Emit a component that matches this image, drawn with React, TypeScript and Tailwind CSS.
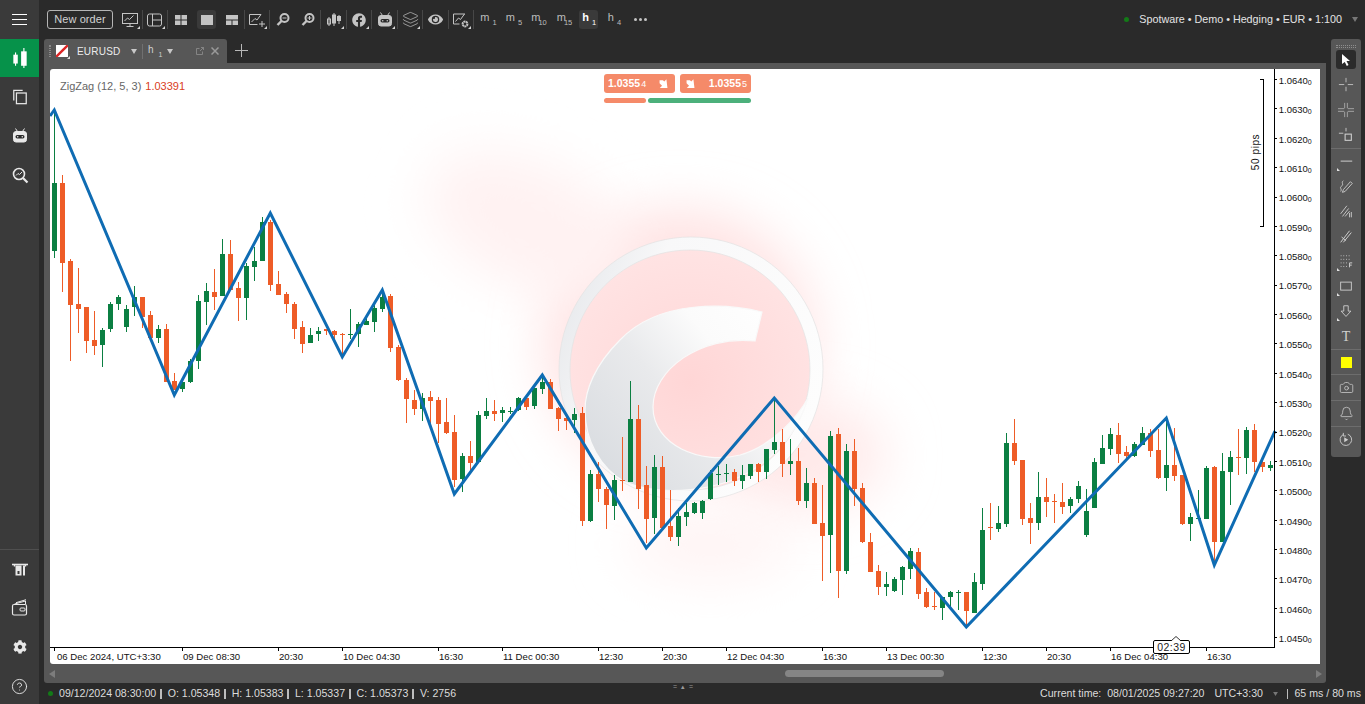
import type { ReactNode } from "react";
import { Bell, Camera, CircleHelp, Layers } from "lucide-react";
import { FaCog, FaEye, FaFacebook } from "react-icons/fa";

// [colour, wickTop, wickBottom, bodyTop, bodyBottom]; candles are 8px apart
type Candle = ["g" | "r", number, number, number, number];
const candles: Candle[] = [
  ["g", 110, 258, 183, 251], ["r", 175, 292, 183, 263], ["r", 259, 361, 261, 305], ["r", 268, 333, 304, 309],
  ["r", 307, 353, 307, 341], ["r", 311, 355, 340, 346], ["g", 328, 367, 330, 345], ["g", 302, 332, 304, 329],
  ["g", 295, 310, 297, 304], ["g", 305, 332, 309, 327], ["g", 286, 316, 297, 307], ["r", 297, 328, 297, 317],
  ["r", 311, 340, 315, 338], ["g", 325, 343, 329, 338], ["r", 324, 382, 329, 382], ["r", 373, 390, 381, 390],
  ["g", 380, 392, 382, 389], ["g", 359, 383, 361, 382], ["g", 295, 369, 301, 361], ["g", 283, 325, 291, 302],
  ["r", 269, 310, 292, 297], ["g", 239, 296, 254, 296], ["r", 240, 290, 254, 290], ["r", 282, 321, 288, 298],
  ["g", 263, 320, 266, 298], ["g", 247, 281, 261, 267], ["g", 217, 261, 222, 261], ["r", 220, 291, 222, 285],
  ["r", 271, 295, 284, 295], ["r", 292, 313, 294, 304], ["r", 302, 339, 304, 329], ["r", 321, 353, 327, 344],
  ["g", 328, 343, 335, 343], ["g", 327, 341, 331, 334], ["r", 329, 335, 329, 331], ["r", 330, 343, 331, 335],
  ["r", 333, 355, 334, 335], ["g", 309, 339, 334, 335], ["g", 322, 347, 324, 334], ["g", 318, 325, 321, 325],
  ["g", 305, 332, 308, 322], ["g", 290, 312, 297, 309], ["r", 294, 352, 296, 348], ["r", 345, 381, 347, 380],
  ["r", 378, 423, 380, 399], ["r", 390, 415, 400, 409], ["g", 393, 421, 398, 409], ["r", 391, 423, 397, 401],
  ["r", 397, 443, 400, 424], ["r", 398, 434, 422, 433], ["r", 415, 487, 432, 480], ["g", 453, 492, 456, 479],
  ["r", 441, 470, 456, 463], ["g", 411, 463, 415, 462], ["g", 398, 419, 411, 416], ["r", 400, 421, 411, 414],
  ["g", 407, 422, 410, 413], ["g", 407, 414, 411, 412], ["g", 397, 411, 398, 410], ["r", 397, 410, 398, 407],
  ["g", 388, 409, 388, 406], ["g", 375, 394, 382, 389], ["r", 379, 409, 382, 409], ["r", 407, 431, 408, 419],
  ["r", 417, 430, 418, 421], ["g", 408, 433, 414, 420], ["r", 407, 526, 413, 521], ["g", 470, 522, 474, 521],
  ["r", 462, 502, 474, 489], ["r", 487, 529, 489, 505], ["g", 475, 520, 480, 506], ["r", 437, 491, 480, 481],
  ["g", 381, 482, 419, 482], ["r", 405, 509, 419, 489], ["r", 466, 543, 485, 519], ["g", 455, 534, 467, 518],
  ["r", 456, 528, 467, 528], ["r", 490, 541, 526, 537], ["g", 508, 546, 516, 537], ["g", 503, 526, 512, 517],
  ["g", 502, 514, 503, 513], ["g", 500, 519, 501, 513], ["g", 470, 500, 473, 499], ["g", 466, 485, 474, 475],
  ["g", 464, 482, 473, 474], ["r", 469, 486, 472, 481], ["g", 465, 489, 475, 481], ["g", 464, 479, 464, 476],
  ["r", 463, 482, 464, 472], ["g", 449, 479, 449, 472], ["g", 400, 454, 442, 450], ["r", 429, 477, 442, 464],
  ["g", 439, 475, 461, 464], ["r", 448, 505, 461, 501], ["g", 468, 508, 483, 501], ["r", 478, 524, 483, 524],
  ["r", 485, 581, 523, 536], ["g", 431, 573, 436, 535], ["r", 428, 598, 434, 571], ["g", 444, 574, 451, 571],
  ["r", 439, 506, 451, 489], ["r", 483, 543, 488, 542], ["r", 533, 572, 542, 572], ["r", 565, 595, 571, 587],
  ["g", 572, 596, 584, 587], ["g", 577, 592, 579, 591], ["g", 566, 595, 567, 580], ["g", 548, 579, 551, 569],
  ["r", 548, 599, 552, 594], ["r", 588, 608, 592, 607], ["r", 592, 610, 606, 607], ["g", 597, 620, 597, 608],
  ["g", 591, 607, 592, 597], ["g", 590, 610, 592, 593], ["r", 592, 627, 592, 611], ["g", 573, 613, 582, 613],
  ["g", 508, 590, 530, 584], ["r", 503, 540, 527, 528], ["g", 506, 532, 523, 529], ["g", 433, 527, 443, 524],
  ["r", 419, 465, 443, 461], ["r", 460, 525, 460, 519], ["r", 503, 544, 518, 523], ["g", 472, 530, 497, 523],
  ["r", 478, 517, 497, 502], ["r", 494, 523, 501, 502], ["r", 483, 514, 502, 507], ["g", 497, 513, 499, 506],
  ["g", 481, 503, 486, 499], ["g", 489, 537, 511, 535], ["g", 458, 508, 462, 508], ["g", 435, 464, 448, 464],
  ["g", 428, 455, 434, 449], ["r", 423, 463, 435, 454], ["r", 446, 458, 452, 456], ["g", 442, 457, 444, 456],
  ["g", 427, 445, 433, 445], ["r", 429, 457, 433, 451], ["r", 429, 479, 450, 478], ["g", 420, 491, 465, 478],
  ["r", 428, 481, 465, 476], ["r", 475, 525, 475, 524], ["g", 513, 541, 517, 524], ["g", 490, 519, 518, 519],
  ["g", 466, 519, 468, 519], ["r", 466, 563, 467, 542], ["g", 453, 542, 471, 542], ["g", 451, 505, 457, 472],
  ["r", 429, 475, 457, 458], ["g", 427, 474, 430, 458], ["r", 424, 472, 430, 462], ["r", 461, 472, 462, 467],
  ["g", 461, 471, 465, 468],
];

const zigzag = "50,116 54.3,110 174.3,395 270.3,213 342.3,357 382.3,290 454.3,494 542.3,375 646.3,548 774.3,398 966.3,627 1166.3,418 1214.3,565 1275,431";

const prices = ["1.0640", "1.0630", "1.0620", "1.0610", "1.0600", "1.0590", "1.0580", "1.0570", "1.0560", "1.0550", "1.0540", "1.0530", "1.0520", "1.0510", "1.0500", "1.0490", "1.0480", "1.0470", "1.0460", "1.0450"];

const times: [number, string][] = [
  [54, "06 Dec 2024, UTC+3:30"], [182, "09 Dec 08:30"], [278, "20:30"], [342, "10 Dec 04:30"], [438, "16:30"],
  [502, "11 Dec 00:30"], [598, "12:30"], [662, "20:30"], [726, "12 Dec 04:30"], [822, "16:30"], [886, "13 Dec 00:30"],
  [982, "12:30"], [1046, "20:30"], [1110, "16 Dec 04:30"], [1206, "16:30"],
];

function Watermark() {
  return (
    <g>
      <circle cx="680" cy="345" r="135" fill="#ffe2e2" filter="url(#glow)" />
      <ellipse cx="530" cy="225" rx="110" ry="62" fill="#fff2f2" filter="url(#glow)" transform="rotate(25 530 225)" />
      <ellipse cx="800" cy="455" rx="85" ry="55" fill="#ffe9e9" filter="url(#glow)" />
      <ellipse cx="710" cy="545" rx="85" ry="35" fill="#fff4f4" filter="url(#glow)" />
      <circle cx="690" cy="370" r="120" fill="url(#disc)" />
      <path d="M691 237a132 132 0 1 0 .01 0zM690 250a120 120 0 1 1-.01 0z" fillRule="evenodd" fill="url(#ring)" stroke="#e2e2e2" strokeWidth="0.7" />
      <path d="M762 312C730 304 660 298 620 340C595 365 585 390 585 410C585 440 600 468 625 482C660 496 720 494 760 465C785 447 800 425 808 398C800 413 775 445 740 455C700 465 653 445 653 407C653 370 700 335 755 341Z" fill="url(#crescent)" stroke="#f9f9f9" strokeWidth="1.2" />
    </g>
  );
}

function ChartSvg() {
  return (
    <svg viewBox="50 69 1270 595" className="block h-full w-full">
      <defs>
        <filter id="glow" x="-60%" y="-60%" width="220%" height="220%">
          <feGaussianBlur stdDeviation="26" />
        </filter>
        <radialGradient id="disc" cx="50%" cy="55%" r="55%">
          <stop offset="0%" stopColor="#ffd6d6" />
          <stop offset="100%" stopColor="#ffe3e3" />
        </radialGradient>
        <linearGradient id="ring" x1="0" y1="0.2" x2="1" y2="0.6">
          <stop offset="0%" stopColor="#e6e8eb" />
          <stop offset="30%" stopColor="#f8f8f9" />
          <stop offset="100%" stopColor="#fdfdfd" />
        </linearGradient>
        <linearGradient id="crescent" x1="0" y1="0.75" x2="0.95" y2="0.1">
          <stop offset="0%" stopColor="#dadde1" />
          <stop offset="40%" stopColor="#e9eaec" />
          <stop offset="68%" stopColor="#fbfbfb" />
          <stop offset="100%" stopColor="#ffffff" />
        </linearGradient>
      </defs>
      <Watermark />
      <g shapeRendering="crispEdges">
        {candles.map(([c, wt, wb, bt, bb], i) => {
          const fill = c === "g" ? "#0b7f42" : "#ee5c27";
          return (
            <g key={i} fill={fill}>
              <rect x={54 + 8 * i} y={wt} width="1" height={wb - wt} />
              <rect x={52 + 8 * i} y={bt} width="5" height={Math.max(bb - bt, 1)} />
            </g>
          );
        })}
      </g>
      <rect x="1275.5" y="69" width="44.5" height="595" fill="#fff" />
      <polyline points={zigzag} fill="none" stroke="#0f6cb3" strokeWidth="3" strokeLinejoin="miter" />
      <g shapeRendering="crispEdges" fill="#000">
        <rect x="1274" y="69" width="1" height="579" />
        <rect x="50" y="647" width="1225" height="1" />
        {prices.map((_, i) => (
          <rect key={i} x="1275" y={79 + Math.round(i * 29.38)} width="2" height="1" />
        ))}
        {times.map(([x, t]) => (
          <rect key={x + t} x={x} y="648" width="1" height="3" />
        ))}
        <rect x="1263" y="79" width="1" height="148" />
        <rect x="1260" y="79" width="3" height="1" />
        <rect x="1260" y="226" width="3" height="1" />
      </g>
      {prices.map((p, i) => (
        <text key={p} x="1278.8" y={83.8 + i * 29.38} fontSize="9.5" fill="#111">
          {p}
          <tspan fontSize="7" dy="1">0</tspan>
        </text>
      ))}
      {times.map(([x, t], i) => (
        <text key={x + t} x={x + (i === 0 ? 3 : 1)} y="660" fontSize="9.6" fill="#111">
          {t}
        </text>
      ))}
    </svg>
  );
}

function Tool({ children, tri, sep, active }: { children: ReactNode; tri?: boolean; sep?: boolean; active?: boolean }) {
  return (
    <div className={`relative flex h-[19px] w-[25.5px] shrink-0 items-center justify-center text-[#c4c4c4] ${sep ? "border-r border-[#474747]" : ""}`}>
      {active && <div className="absolute left-[3px] top-0 h-[19px] w-[19px] rounded-[3px] bg-[#3a3a3a]" />}
      <div className="relative flex">{children}</div>
      {tri && (
        <svg viewBox="0 0 3 3" className="absolute bottom-0 right-[2px] h-[3px] w-[3px]">
          <path d="M3 0v3H0z" fill="#d5d5d5" />
        </svg>
      )}
    </div>
  );
}

function Frame({ active, label, sub, tight }: { active?: boolean; label: string; sub: string; tight?: boolean }) {
  return (
    <div className="relative flex h-[19px] w-[25.5px] shrink-0 items-center">
      {active && <div className="absolute left-[3px] top-0 h-[19px] w-[19px] rounded-[3px] bg-[#3a3a3a]" />}
      <span className={`relative ml-[6px] flex items-start text-[11px] leading-none ${active ? "font-bold text-white" : "text-[#bdbdbd]"}`}>
        {label}
        <span className={`mt-[7px] text-[7.5px] font-normal leading-none ${tight ? "-ml-[2px]" : "ml-[3px]"}`}>{sub}</span>
      </span>
    </div>
  );
}

function S({ children, size = 18, className = "" }: { children: ReactNode; size?: number; className?: string }) {
  return (
    <svg viewBox="0 0 18 18" width={size} height={size} fill="none" stroke="currentColor" strokeWidth="1" className={className}>
      {children}
    </svg>
  );
}

function RobotFace() {
  return (
    <S>
      <path d="M4.5 1.5l2 3M13.5 1.5l-2 3" />
      <rect x="2.5" y="4.5" width="13" height="10.5" rx="2.5" fill="currentColor" />
      <rect x="4.5" y="8" width="9" height="3.5" rx="1.7" fill="#2a2a2a" stroke="none" />
      <circle cx="6.7" cy="9.7" r="0.8" fill="currentColor" stroke="none" />
      <circle cx="11.3" cy="9.7" r="0.8" fill="currentColor" stroke="none" />
    </S>
  );
}

function Toolbar() {
  return (
    <div className="flex h-[39px] shrink-0 items-center pl-2">
      <button className="h-[19px] w-[66px] rounded-[3px] border border-[#b5b5b5] text-[11px] leading-none tracking-[0.1px] text-[#d2d2d2]">New order</button>
      <div className="ml-[4.25px] flex items-center">
        <Tool sep tri>
          <S>
            <rect x="1.5" y="2.5" width="15" height="10" />
            <path d="M3.5 10l3-3 2 1.5 4-4M9 12.5v3M5.5 15.5h7" />
          </S>
        </Tool>
        <Tool sep tri>
          <S>
            <rect x="1.5" y="3" width="14" height="12" rx="2" />
            <path d="M6.5 3v12M6.5 9h9" />
          </S>
        </Tool>
        <Tool>
          <S>
            <g fill="currentColor" stroke="none">
              <rect x="3" y="4" width="5.5" height="4.5" />
              <rect x="9.5" y="4" width="5.5" height="4.5" />
              <rect x="3" y="9.5" width="5.5" height="4.5" />
              <rect x="9.5" y="9.5" width="5.5" height="4.5" />
            </g>
          </S>
        </Tool>
        <Tool active>
          <S>
            <rect x="3" y="4" width="12" height="10" fill="currentColor" stroke="none" />
          </S>
        </Tool>
        <Tool sep>
          <S>
            <g fill="currentColor" stroke="none">
              <rect x="3" y="4" width="12" height="4.5" />
              <rect x="3" y="9.5" width="5.5" height="4.5" />
              <rect x="9.5" y="9.5" width="5.5" height="4.5" />
            </g>
          </S>
        </Tool>
        <Tool sep tri>
          <S>
            <path d="M13 3.5H1.5v10h8" />
            <path d="M3.5 11l3.5-3.5 2 1.5 4-5.5M14 10v6M11 13h6" />
          </S>
        </Tool>
        <Tool>
          <S>
            <circle cx="10.5" cy="7" r="4" strokeWidth="2" />
            <path d="M7.5 10L3.5 14" strokeWidth="2.4" />
            <path d="M8.5 7h4" />
          </S>
        </Tool>
        <Tool sep>
          <S>
            <circle cx="10.5" cy="7" r="4" strokeWidth="2" />
            <path d="M7.5 10L3.5 14" strokeWidth="2.4" />
            <path d="M8.5 7h4M10.5 5v4" />
          </S>
        </Tool>
        <Tool sep tri>
          <S>
            <path d="M4 6v9M9 2v13M14 4v9" />
            <rect x="2.5" y="8" width="3" height="5" fill="none" />
            <rect x="7.5" y="4" width="3" height="8" fill="currentColor" />
            <rect x="12.5" y="5.5" width="3" height="4" fill="currentColor" />
          </S>
        </Tool>
        <Tool sep tri>
          <FaFacebook size={14} />
        </Tool>
        <Tool sep tri>
          <RobotFace />
        </Tool>
        <Tool sep tri>
          <Layers size={17} strokeWidth={1} />
        </Tool>
        <Tool sep>
          <FaEye size={15} />
        </Tool>
        <Tool sep tri>
          <S>
            <path d="M13 3H1.5v10h6" />
            <path d="M3.5 10.5l3-3.5 2 1.5 4-5.5" />
            <circle cx="13" cy="13" r="2.4" strokeWidth="2" strokeDasharray="1.8 0.4" />
          </S>
        </Tool>
        <Frame label="m" sub="1" />
        <Frame label="m" sub="5" />
        <Frame label="m" sub="10" tight />
        <Frame label="m" sub="15" tight />
        <Frame label="h" sub="1" active />
        <Frame label="h" sub="4" />
        <Tool>
          <span className="flex gap-[2px]">
            <i className="h-[3px] w-[3px] rounded-full bg-[#c4c4c4]" />
            <i className="h-[3px] w-[3px] rounded-full bg-[#c4c4c4]" />
            <i className="h-[3px] w-[3px] rounded-full bg-[#c4c4c4]" />
          </span>
        </Tool>
      </div>
      <div className="ml-auto flex items-center pr-[7px] text-[10.75px] text-[#e4e4e4]">
        <i className="mr-[10px] h-[5px] w-[5px] rounded-full bg-[#137a17]" />
        <span>Spotware • Demo • Hedging • EUR • 1:100</span>
        <svg viewBox="0 0 6 5" className="ml-[10px] h-[5px] w-[6px]">
          <path d="M0 0h6L3 5z" fill="#777" />
        </svg>
      </div>
    </div>
  );
}

function Sidebar() {
  return (
    <aside className="flex w-[39px] shrink-0 flex-col bg-[#3a3a3a] text-[#e8e8e8]">
      <div className="flex h-[39px] items-center justify-center">
        <div className="flex w-[15px] flex-col gap-[4px]">
          <i className="h-px bg-white" />
          <i className="h-px bg-white" />
          <i className="h-px bg-white" />
        </div>
      </div>
      <div className="flex h-[38px] items-center justify-center bg-[#06924a] text-white">
        <S size={20}>
          <g fill="currentColor" stroke="none">
            <rect x="3" y="6" width="4" height="8" />
            <rect x="4.5" y="4" width="1" height="12" />
            <rect x="10" y="3" width="5" height="13" />
            <rect x="12" y="0" width="1" height="18" />
          </g>
        </S>
      </div>
      <div className="flex flex-col items-center">
        <div className="flex h-[40px] items-center justify-center">
          <S size={16}>
            <rect x="5" y="4.5" width="11" height="12" strokeWidth="1.4" />
            <path d="M2 13V1.5h10" strokeWidth="1.4" />
          </S>
        </div>
        <div className="flex h-[38px] items-center justify-center">
          <RobotFace />
        </div>
        <div className="flex h-[40px] items-center justify-center">
          <S>
            <circle cx="8" cy="8" r="5.5" strokeWidth="1.6" />
            <path d="M12 12l4.5 4.5" strokeWidth="2.2" />
            <path d="M5 9.5l2-2 1.5 1 2.5-2.5" />
          </S>
        </div>
      </div>
      <div className="mt-auto flex flex-col items-center border-t border-[#4f4f4f]">
        <div className="flex h-[40px] items-center justify-center">
          <S>
            <path d="M1 3.5h16" strokeWidth="1.6" />
            <path d="M3.5 3.5v2M14.5 3.5v2" strokeWidth="1.4" />
            <rect x="4.5" y="4.5" width="6" height="10" fill="currentColor" stroke="none" />
            <rect x="6.5" y="10" width="2" height="3" fill="#3a3a3a" stroke="none" />
            <rect x="12" y="4.5" width="2" height="10" fill="currentColor" stroke="none" />
          </S>
        </div>
        <div className="flex h-[36px] items-center justify-center">
          <S>
            <rect x="1.5" y="5.5" width="14" height="10.5" rx="1.5" strokeWidth="1.2" />
            <path d="M3.5 5l11-3v3M5 3.7l10-3" />
            <rect x="9" y="9" width="5" height="3" rx="1" />
          </S>
        </div>
        <div className="flex h-[42px] items-center justify-center">
          <FaCog size={14} />
        </div>
        <div className="flex h-[36px] items-center justify-center">
          <CircleHelp size={17} strokeWidth={1.3} />
        </div>
      </div>
    </aside>
  );
}

function Tabs() {
  return (
    <div className="flex h-[24px] shrink-0 items-end">
      <div className="flex h-[24px] w-[183px] items-center rounded-t-[3px] bg-[#575757]">
        <div className="ml-[5px] h-[12px] w-[2px] border-x border-dotted border-[#8a8a8a]" />
        <div className="relative ml-[5px]">
          <svg viewBox="0 0 12 12" className="block h-[12px] w-[12px]">
            <rect width="12" height="12" fill="#fff" />
            <path d="M0 12L12 0" stroke="#dc2626" strokeWidth="2.4" />
            <path d="M0 0h6L0 6z" fill="#fff" />
          </svg>
          <svg viewBox="0 0 3 3" className="absolute -bottom-[2px] -right-[2px] h-[3px] w-[3px]">
            <path d="M3 0v3H0z" fill="#ddd" />
          </svg>
        </div>
        <span className="ml-[9px] w-[49px] text-[10px] tracking-[0.2px] text-[#ececec]">EURUSD</span>
        <svg viewBox="0 0 6 5" className="ml-[5px] h-[5px] w-[6px]">
          <path d="M0 0h6L3 5z" fill="#c8c8c8" />
        </svg>
        <div className="ml-[5px] h-[15px] w-px bg-[#707070]" />
        <span className="ml-[5px] flex items-start text-[10px] leading-none text-[#cfcfcf]">
          h<span className="ml-[5px] mt-[6px] text-[7px] leading-none">1</span>
        </span>
        <svg viewBox="0 0 6 5" className="ml-[5px] h-[5px] w-[6px]">
          <path d="M0 0h6L3 5z" fill="#c8c8c8" />
        </svg>
        <svg viewBox="0 0 8 8" className="ml-[23px] h-[8px] w-[8px]" fill="none" stroke="#8f8f8f">
          <path d="M3.5 1.5H.5v6h6v-3M4 4l3.5-3.5M5 .5h2.5V3" strokeWidth="0.8" />
        </svg>
        <svg viewBox="0 0 8 8" className="ml-[7px] h-[8px] w-[8px]" fill="none" stroke="#9a9a9a">
          <path d="M.5.5l7 7M7.5.5l-7 7" strokeWidth="1.5" />
        </svg>
      </div>
      <svg viewBox="0 0 13 13" className="mb-[6px] ml-[8px] h-[13px] w-[13px]" fill="none" stroke="#b8b8b8">
        <path d="M6.5 0v13M0 6.5h13" />
      </svg>
    </div>
  );
}

function SmallNum({ v, s }: { v: string; s: string }) {
  return (
    <span className="text-[10.5px] font-bold leading-none text-white">
      {v}
      <span className="ml-px text-[9px] font-normal">{s}</span>
    </span>
  );
}

function ArrowDR() {
  return (
    <svg viewBox="0 0 8 8" className="h-[9px] w-[9px]">
      <path d="M.5 1h3l1.2 1.2L6.6.3 7.5 8H.7l2-2L.5 3.8z" fill="#fff" />
    </svg>
  );
}

function ChartPanel() {
  return (
    <div className="relative h-[595px] rounded-[3px] bg-white">
      <ChartSvg />
      <div className="absolute left-[10px] top-[11px] flex gap-[4px] text-[11px] leading-[13px] text-[#666]">
        <span>ZigZag (12, 5, 3)</span>
        <span className="text-[#d9401c]">1.03391</span>
      </div>
      <div className="absolute left-[554px] top-[5px] flex w-[147px] flex-col gap-[5px]">
        <div className="flex gap-[5px]">
          <div className="flex h-[19px] w-[71px] items-center justify-between rounded-[3px] bg-[#f58a69] pl-[4px] pr-[7px]">
            <SmallNum v="1.0355" s="4" />
            <ArrowDR />
          </div>
          <div className="flex h-[19px] w-[71px] items-center justify-between rounded-[3px] bg-[#f58a69] pl-[6px] pr-[4px]">
            <ArrowDR />
            <SmallNum v="1.0355" s="5" />
          </div>
        </div>
        <div className="flex gap-[2px]">
          <div className="h-[5px] w-[42px] rounded-full bg-[#f58a69]" />
          <div className="h-[5px] flex-1 rounded-full bg-[#4cb07b]" />
        </div>
      </div>
      <div className="absolute left-[1206px] top-[77px] origin-center -translate-x-1/2 -rotate-90 text-[10px] leading-[12px] tracking-[0.6px] text-[#111]">50 pips</div>
      <div className="absolute left-[1103px] top-[571px] flex h-[14px] w-[37px] items-center justify-center rounded-[2px] border border-black bg-white text-[10.5px] leading-none tracking-[0.4px] text-[#222]">
        02:39
        <svg viewBox="0 0 10 5" className="absolute -top-[5px] left-[17px] h-[5px] w-[10px]" fill="#fff" stroke="#000" strokeWidth="0.8">
          <path d="M0 5l5-4.5L10 5" />
        </svg>
      </div>
    </div>
  );
}

function ChartFrame() {
  return (
    <div className="flex min-w-0 flex-1 flex-col">
      <Tabs />
      <div className="flex flex-1 flex-col rounded-b-[3px] bg-[#575757] px-[6px] pt-[6px]">
        <ChartPanel />
        <div className="relative flex flex-1 items-center">
          <svg viewBox="0 0 6 8" className="ml-[-1px] h-[8px] w-[6px]">
            <path d="M6 0v8L0 4z" fill="#7d7d7d" />
          </svg>
          <div className="ml-[730px] h-[7px] w-[159px] rounded-full bg-[#858585]" />
          <svg viewBox="0 0 6 8" className="ml-auto mr-[-2px] h-[8px] w-[6px]">
            <path d="M0 0v8l6-4z" fill="#7d7d7d" />
          </svg>
        </div>
      </div>
    </div>
  );
}

function Drawing({ children, tri }: { children: ReactNode; tri?: boolean }) {
  return (
    <div className="relative flex h-[25px] items-center justify-center text-[#d0d0d0]">
      {children}
      {tri && (
        <svg viewBox="0 0 3 3" className="absolute bottom-[3px] left-[6px] h-[3px] w-[3px]">
          <path d="M0 0v3h3z" fill="#e0e0e0" />
        </svg>
      )}
    </div>
  );
}

function DrawingTools() {
  return (
    <div className="mr-[4px] flex h-[418px] w-[30px] shrink-0 flex-col rounded-[3px] bg-[#575757]">
      <div className="mx-[5px] mt-[6px] h-[3px] border-y border-dotted border-[#8e8e8e]" />
      <div className="mx-[5px] mt-[2px] flex h-[19px] items-center justify-center rounded-[3px] bg-[#2b2b2b]">
        <svg viewBox="0 0 10 12" className="h-[12px] w-[10px]">
          <path d="M1 0l8 7H5.5l2 4-1.7 1-2-4L1 10z" fill="#fff" />
        </svg>
      </div>
      <div className="mt-[3px] flex flex-col">
        <Drawing>
          <S size={16}><path d="M1 8.5h6M11 8.5h6M9 1v5M9 11v5" strokeWidth="0.9" /></S>
        </Drawing>
        <Drawing>
          <S size={16}><path d="M0 7.5h7M11 7.5h7M0 10.5h7M11 10.5h7M7.5 1v6M10.5 1v6M7.5 11v6M10.5 11v6" strokeWidth="0.7" /></S>
        </Drawing>
        <div className="border-b border-[#6d6d6d] pb-[1px]">
          <Drawing>
            <S size={16}><path d="M1 7h5M9 1v4" /><rect x="8" y="8" width="7" height="7" strokeWidth="1.2" /></S>
          </Drawing>
        </div>
        <Drawing tri>
          <S size={16}><path d="M3 8h13" strokeWidth="1.1" /></S>
        </Drawing>
        <Drawing>
          <S size={16}><path d="M6 2C3 4 7 6 4 8s1 3-1 6M8 14l8-9-2-2-8 9-1 3z" /></S>
        </Drawing>
        <Drawing>
          <S size={16}><path d="M3 11L10 2M5 14l7-9M8 14l5-6M13 10v5M15 9v6" /></S>
        </Drawing>
        <Drawing>
          <S size={16}><path d="M3 15L13 2M6 15l9-11M4 9l5 4" strokeWidth="1.1" /></S>
        </Drawing>
        <Drawing tri>
          <S size={16}>
            <path d="M3 2h12M3 6h12M3 10h8M3 14h7" strokeDasharray="1 2" />
            <path d="M13 10v5M13 10h3M13 12.5h2.5" strokeWidth="1.1" />
          </S>
        </Drawing>
        <Drawing tri>
          <S size={16}><rect x="3" y="3.5" width="12" height="9" /></S>
        </Drawing>
        <Drawing tri>
          <S size={16}><path d="M6.5 2h5v6h3L9 14 3.5 8h3z" /></S>
        </Drawing>
        <div className="border-b border-[#6d6d6d]">
          <Drawing>
            <span className="text-[14px] leading-none [font-family:'Liberation_Serif',serif]">T</span>
          </Drawing>
        </div>
        <div className="flex h-[25px] items-center justify-center border-b border-[#6d6d6d]">
          <i className="h-[11px] w-[11px] bg-[#ffff00]" />
        </div>
        <div className="border-b border-[#6d6d6d]">
          <Drawing>
            <Camera size={15} strokeWidth={1.2} />
          </Drawing>
        </div>
        <div className="border-b border-[#6d6d6d]">
          <Drawing>
            <Bell size={15} strokeWidth={1.2} />
          </Drawing>
        </div>
        <Drawing>
          <S size={16}>
            <path d="M11 2.5A6.5 6.5 0 1 1 6 2.8M6 1v3.5h3" />
            <path d="M7 6v5.5l4.5-2.7z" fill="currentColor" stroke="none" />
          </S>
        </Drawing>
      </div>
    </div>
  );
}

function Pipe({ w = "ml-[4px] mr-[6px]" }: { w?: string }) {
  return <i className={`h-[10px] w-[1.5px] bg-[#bdbdbd] ${w}`} />;
}

function StatusBar() {
  return (
    <div className="relative flex h-[21px] shrink-0 items-center pl-[9px] pr-[4px] text-[10.6px] text-[#dcdcdc]">
      <div className="absolute left-[634px] top-[1px] text-[7px] leading-[6px] tracking-[1px] text-[#9a9a9a]">= ▴ =</div>
      <i className="mr-[5px] h-[5px] w-[5px] rounded-full bg-[#137a17]" />
      <span className="ml-px">09/12/2024 08:30:00</span>
      <Pipe />
      <span>O: 1.05348</span>
      <Pipe />
      <span>H: 1.05383</span>
      <Pipe />
      <span>L: 1.05337</span>
      <Pipe />
      <span>C: 1.05373</span>
      <Pipe />
      <span>V: 2756</span>
      <span className="ml-auto">Current time:&nbsp; 08/01/2025 09:27:20</span>
      <span className="ml-[10px]">UTC+3:30</span>
      <svg viewBox="0 0 6 5" className="ml-[10px] h-[4px] w-[5px]">
        <path d="M0 0h6L3 5z" fill="#777" />
      </svg>
      <Pipe w="ml-[9px] mr-[6px]" />
      <span>65 ms / 80 ms</span>
    </div>
  );
}

export default function App() {
  return (
    <div className="flex h-[704px] w-[1365px] overflow-hidden bg-[#2a2a2a] [font-family:'Liberation_Sans',sans-serif]">
      <Sidebar />
      <div className="flex min-w-0 flex-1 flex-col">
        <Toolbar />
        <div className="flex min-h-0 flex-1 gap-[5px] pl-[5px]">
          <ChartFrame />
          <DrawingTools />
        </div>
        <StatusBar />
      </div>
    </div>
  );
}
